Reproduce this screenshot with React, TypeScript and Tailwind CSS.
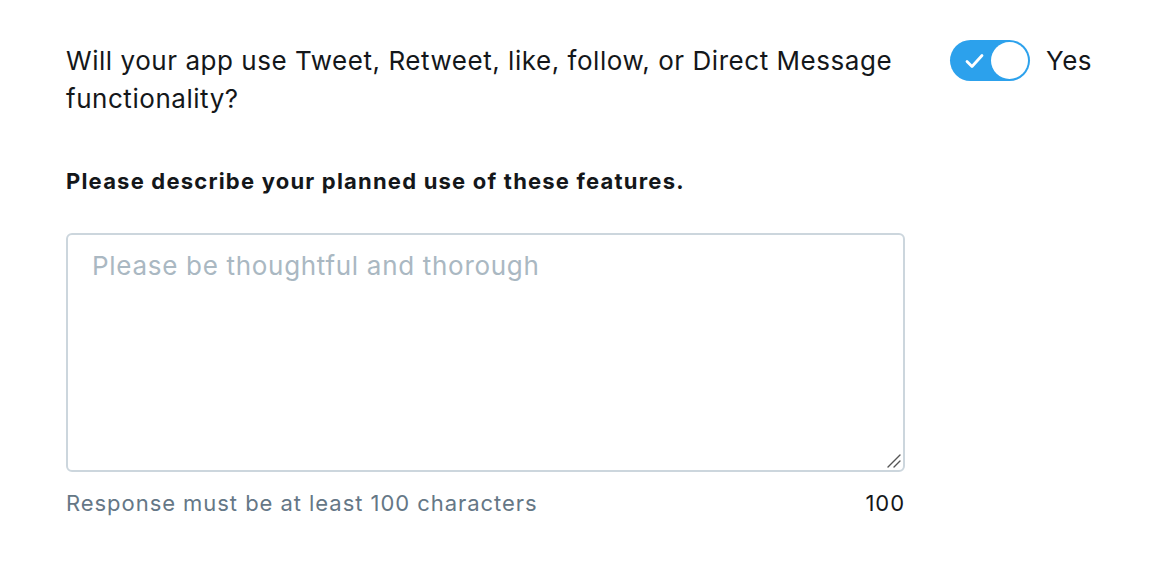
import React from "react";

export default function App() {
  return (
    <div
      className="w-[1162px] h-[582px] bg-white text-[#14171a] relative"
      style={{ fontFamily: "Inter, 'Liberation Sans', sans-serif" }}
    >
      <div className="pl-[66px] pt-[42px] flex">
        <div className="w-[839px] text-[26px] leading-[38px] tracking-[0.54px]">
          Will your app use Tweet, Retweet, like, follow, or Direct Message functionality?
        </div>
        <div className="ml-[45px] flex items-start">
          <div className="mt-[-2px] w-[80px] h-[41px] rounded-full bg-[#2ca1ec] flex items-center justify-between p-[2px] pl-[15px]">
            <svg width="20" height="16" viewBox="0 0 20 16" fill="none">
              <path d="M2 8.5 L7 13.5 L17 2.5" stroke="white" strokeWidth="2.8" strokeLinecap="round" strokeLinejoin="round" />
            </svg>
            <div className="w-[37px] h-[37px] rounded-full bg-white" />
          </div>
          <div className="ml-[16px] text-[26px] leading-[38px] tracking-[0.5px]">Yes</div>
        </div>
      </div>
      <div className="pl-[66px] mt-[48px] text-[22px] font-bold leading-[30px] tracking-[1.2px]">
        Please describe your planned use of these features.
      </div>
      <div className="pl-[66px] mt-[37px] w-[905px]">
        <div className="relative w-[839px]">
          <textarea
            className="block w-[839px] h-[239px] border-2 border-[#ccd6dd] rounded-[6px] px-[24px] py-[14px] text-[26px] leading-[34px] tracking-[0.7px] placeholder-[#aab8c2] resize-none outline-none"
            placeholder="Please be thoughtful and thorough"
          />
          <svg className="absolute right-[3px] bottom-[3px]" width="16" height="16" viewBox="0 0 16 16">
            <path d="M2 14 L14 2 M8 14 L14 8" stroke="#555" strokeWidth="1.4" strokeLinecap="round" />
          </svg>
        </div>
        <div className="flex justify-between mt-[16px] text-[22px] leading-[30px] tracking-[0.95px]">
          <span className="text-[#657786]">Response must be at least 100 characters</span>
          <span className="text-[#14171a]">100</span>
        </div>
      </div>
    </div>
  );
}
